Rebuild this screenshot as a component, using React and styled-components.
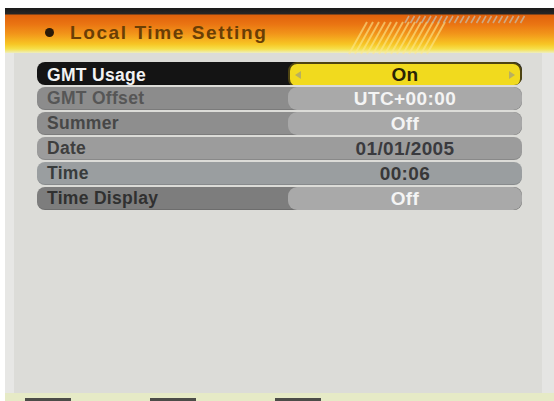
import React from "react";
import styled, { createGlobalStyle } from "styled-components";

const Global = createGlobalStyle`
  html, body { margin: 0; padding: 0; background: #fff; }
  body { font-family: "Liberation Sans", Arial, sans-serif; }
`;

const Screen = styled.div`
  width: 549px;
  height: 401px;
  margin-left: 5px;
  display: flex;
  flex-direction: column;
  overflow: hidden;
`;

const TopGap = styled.div`
  height: 8px;
  margin-left: -5px;
  background: #fff;
`;

const Header = styled.div`
  position: relative;
  height: 45px;
  display: flex;
  align-items: center;
  padding: 4px 0 0 40px;
  box-sizing: border-box;
  gap: 16px;
  background: linear-gradient(
    to bottom,
    #1b1b1b 0px,
    #262626 6px,
    #e0620c 7px,
    #ea7412 16px,
    #f2961a 26px,
    #f7c524 36px,
    #f6e04a 41px,
    #efeebe 45px
  );
`;

const Bullet = styled.span`
  width: 9px;
  height: 9px;
  border-radius: 50%;
  background: #2a1a08;
`;

const Title = styled.h1`
  margin: 0;
  font-size: 19px;
  font-weight: bold;
  letter-spacing: 1.6px;
  color: #6a3e05;
`;

const Stripes = styled.svg`
  position: absolute;
  left: 330px;
  top: 0;
`;

const Panel = styled.div`
  flex: 1;
  background: #dcdcd8;
  border-left: 9px solid #e7e7e5;
  border-right: 12px solid #e5e5e3;
  padding: 9px 20px 0 23px;
`;

const Rows = styled.div`
  display: flex;
  flex-direction: column;
  gap: 2px;
`;

const Row = styled.div`
  height: 23px;
  display: grid;
  grid-template-columns: 251px 1fr;
  border-radius: 8px;
  background: ${(p) => p.$bg};
  overflow: hidden;
  box-shadow: inset 0 -1px 0 rgba(0, 0, 0, 0.12);
`;

const Label = styled.div`
  display: flex;
  align-items: center;
  padding-left: 10px;
  font-size: 17.5px;
  font-weight: bold;
  letter-spacing: 0.3px;
  color: ${(p) => p.$color};
`;

const Value = styled.div`
  position: relative;
  display: flex;
  align-items: center;
  justify-content: center;
  font-size: 19px;
  font-weight: bold;
  letter-spacing: 0.4px;
  color: ${(p) => p.$color};
  background: ${(p) => p.$bg || "transparent"};
  border-radius: ${(p) => (p.$pill ? "9px" : "0")};
  border: ${(p) => p.$border || "none"};
  box-sizing: border-box;
`;

const Arrow = styled.span`
  position: absolute;
  top: 50%;
  transform: translateY(-50%);
  ${(p) => (p.$side === "left" ? "left: 5px;" : "right: 5px;")}
  width: 0;
  height: 0;
  border-top: 4px solid transparent;
  border-bottom: 4px solid transparent;
  ${(p) =>
    p.$side === "left"
      ? "border-right: 6px solid #b8b060;"
      : "border-left: 6px solid #b8b060;"}
`;

const Footer = styled.div`
  height: 8px;
  margin-left: -5px;
  background: #e6eac6;
  display: flex;
  align-items: flex-end;
  gap: 79px;
  padding-left: 25px;
`;

const Tab = styled.span`
  width: 46px;
  height: 3px;
  background: #4c4c48;
`;

const rows = [
  {
    label: "GMT Usage",
    value: "On",
    bg: "#141414",
    labelColor: "#f2f2f2",
    valueBg: "#f1da1e",
    valueColor: "#2a2406",
    pill: true,
    border: "2px solid #4e4412",
    arrows: true,
  },
  {
    label: "GMT Offset",
    value: "UTC+00:00",
    bg: "#8c8c8c",
    labelColor: "#565656",
    valueBg: "#a9a9a9",
    valueColor: "#f4f4f4",
    pill: true,
  },
  {
    label: "Summer",
    value: "Off",
    bg: "#8e8e8e",
    labelColor: "#474747",
    valueBg: "#a8a8a8",
    valueColor: "#f4f4f4",
    pill: true,
  },
  {
    label: "Date",
    value: "01/01/2005",
    bg: "#9c9c9c",
    labelColor: "#3e3e3e",
    valueColor: "#3a3a3e",
  },
  {
    label: "Time",
    value: "00:06",
    bg: "#9a9ea0",
    labelColor: "#383c3c",
    valueColor: "#383838",
  },
  {
    label: "Time Display",
    value: "Off",
    bg: "#7d7d7d",
    labelColor: "#303030",
    valueBg: "#a9a9a9",
    valueColor: "#f4f4f4",
    pill: true,
  },
];

function HeaderStripes() {
  const hatch = [];
  for (let i = 0; i < 14; i++) {
    const x = 14 + i * 6;
    hatch.push(
      <line key={"h" + i} x1={x} y1={46} x2={x + 18} y2={14} stroke="#fbe890" strokeOpacity="0.6" strokeWidth="2" />
    );
  }
  const dash = [];
  for (let i = 0; i < 22; i++) {
    const x = 70 + i * 5.5;
    dash.push(
      <line key={"d" + i} x1={x} y1={15} x2={x + 4} y2={8} stroke="#c8b8a0" strokeOpacity="0.8" strokeWidth="1.6" />
    );
  }
  return (
    <Stripes width="200" height="50" viewBox="0 0 200 50">
      {hatch}
      {dash}
    </Stripes>
  );
}

export default function App() {
  return (
    <>
      <Global />
      <Screen>
        <TopGap />
        <Header>
          <Bullet />
          <Title>Local Time Setting</Title>
          <HeaderStripes />
        </Header>
        <Panel>
          <Rows>
            {rows.map((r) => (
              <Row key={r.label} $bg={r.bg}>
                <Label $color={r.labelColor}>{r.label}</Label>
                <Value
                  $color={r.valueColor}
                  $bg={r.valueBg}
                  $pill={r.pill}
                  $border={r.border}
                >
                  {r.arrows && <Arrow $side="left" />}
                  {r.value}
                  {r.arrows && <Arrow $side="right" />}
                </Value>
              </Row>
            ))}
          </Rows>
        </Panel>
        <Footer>
          <Tab />
          <Tab />
          <Tab />
        </Footer>
      </Screen>
    </>
  );
}
